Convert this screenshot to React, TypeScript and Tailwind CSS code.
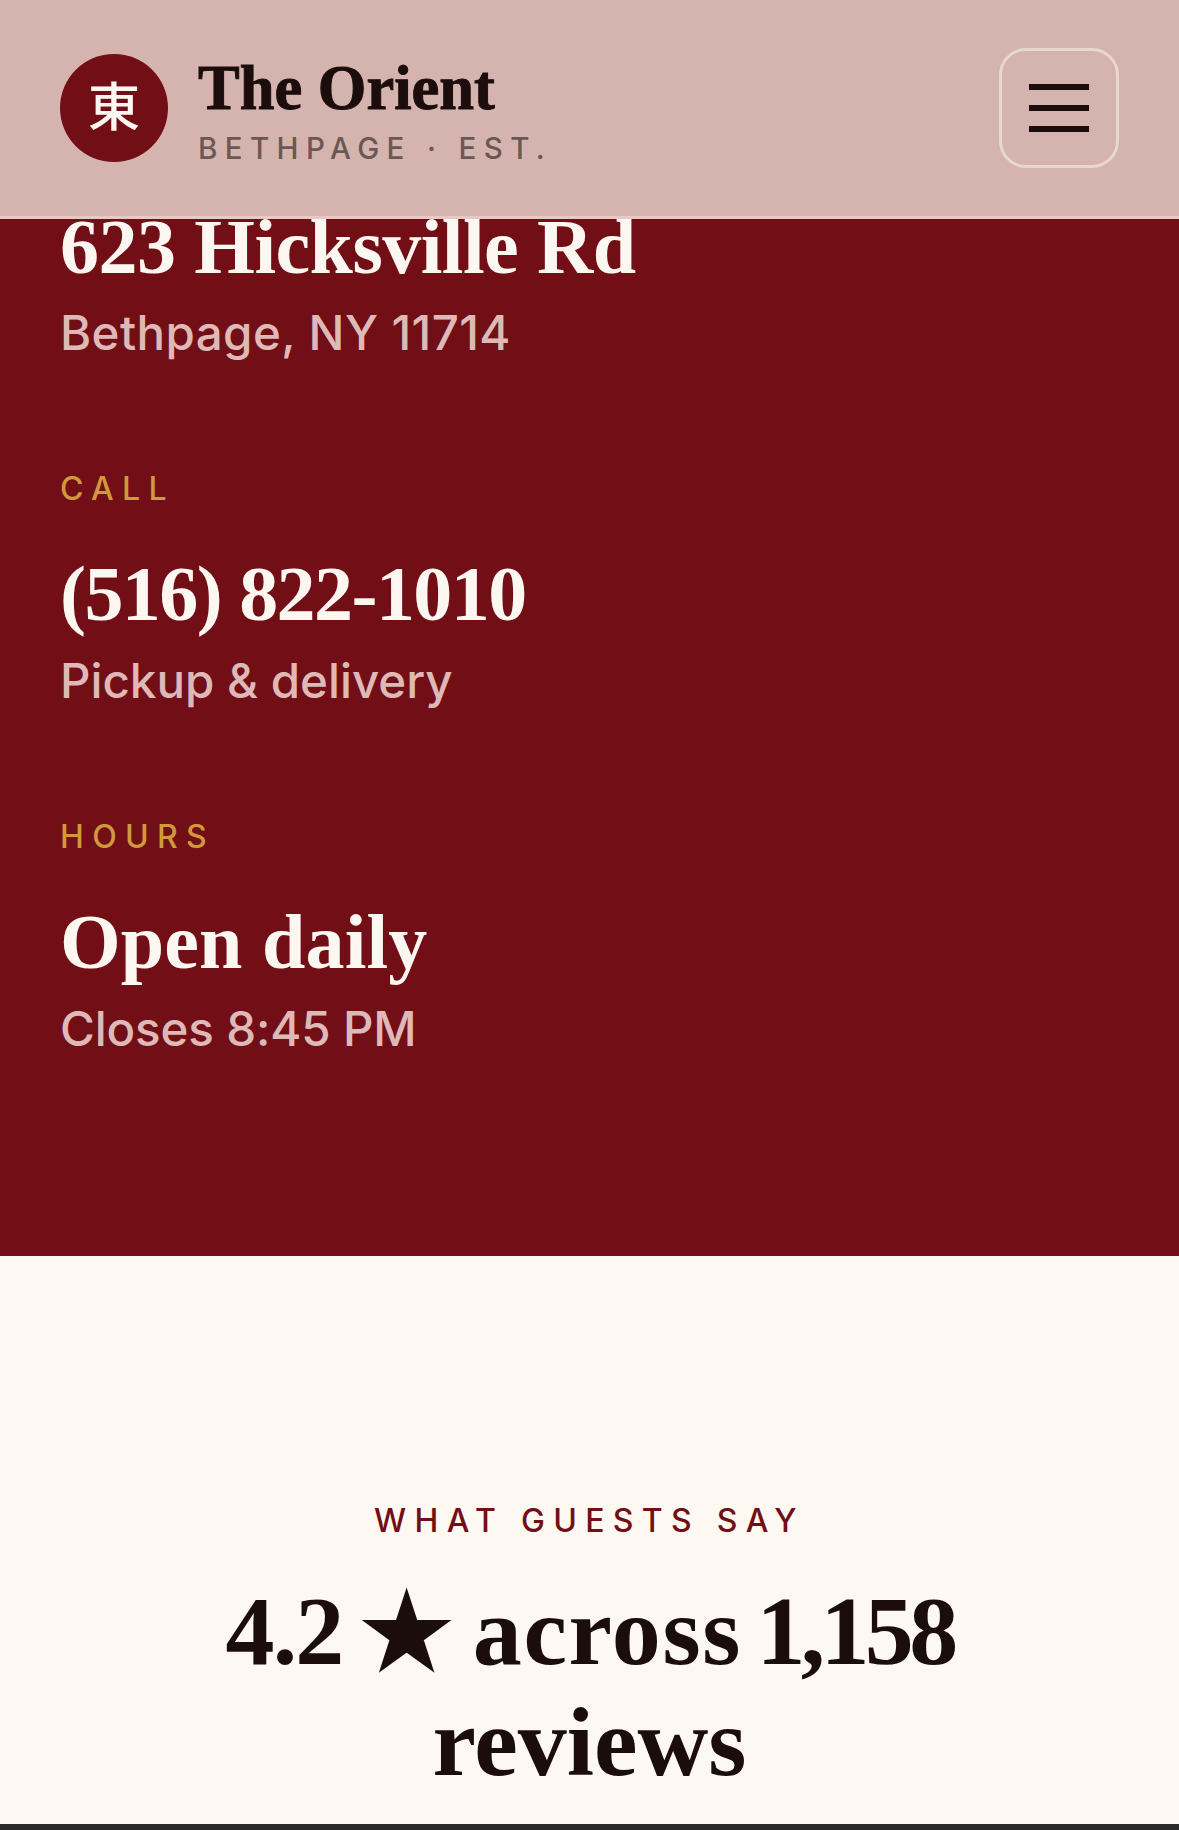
const serif = "font-['Liberation_Serif',serif] font-bold";
const sans = "font-['Inter',sans-serif]";

function Info({ label, title, sub, track, subTrack }: { label: string; title: string; sub: string; track: string; subTrack: string }) {
  return (
    <div className="mt-[107px]">
      <div className={`${sans} text-[32px] leading-[40px] font-medium tracking-[0.26em] text-[#d09a3c]`}>{label}</div>
      <div className={`${serif} ${track} mt-[39px] text-[78px] leading-[92px] text-[#fdf7f1]`}>{title}</div>
      <div className={`${sans} ${subTrack} mt-[12px] text-[47.5px] leading-[58px] font-medium text-[#dfb9b8]`}>{sub}</div>
    </div>
  );
}

export default function App() {
  return (
    <div className="flex h-[1830px] w-[1179px] flex-col overflow-hidden bg-[#fef8f2]">
      <header className="flex h-[219px] shrink-0 items-center justify-between border-b-[3px] border-[#e8c9c4] bg-[#d5b3af] pl-[60px] pr-[60px]">
        <div className="flex items-center gap-[30px]">
          <div className="flex h-[108px] w-[108px] items-center justify-center rounded-full bg-[#720f16] pb-[8px] font-['Noto_Sans_CJK_TC',sans-serif] text-[52px] font-medium text-[#fdf7f1]">東</div>
          <div className="pt-[6px]">
            <div className={`${serif} text-[62.5px] leading-[64px] text-[#1a0d0b] [-webkit-text-stroke:1px_#1a0d0b]`}>The Orient</div>
            <div className={`${sans} mt-[10px] text-[29.5px] leading-[36px] font-medium tracking-[0.25em] text-[#6b5852]`}>BETHPAGE · EST.</div>
          </div>
        </div>
        <button className="flex h-[120px] w-[120px] flex-col items-center justify-center gap-[15px] rounded-[27px] border-[3px] border-[#e8d8d2]">
          <span className="h-[6px] w-[60px] bg-[#1a0d0b]" />
          <span className="h-[6px] w-[60px] bg-[#1a0d0b]" />
          <span className="h-[6px] w-[60px] bg-[#1a0d0b]" />
        </button>
      </header>
      <section className="flex h-[1037px] shrink-0 flex-col overflow-hidden bg-[#720f16] px-[60px]">
        <div className={`${serif} mt-[-18px] text-[78px] leading-[92px] tracking-[-0.55px] text-[#fdf7f1]`}>623 Hicksville Rd</div>
        <div className={`${sans} mt-[11px] text-[47.5px] leading-[58px] font-medium tracking-[0.4px] text-[#dfb9b8]`}>Bethpage, NY 11714</div>
        <Info label="CALL" title="(516) 822-1010" sub="Pickup & delivery" track="tracking-[-1.55px]" subTrack="tracking-normal" />
        <Info label="HOURS" title="Open daily" sub="Closes 8:45 PM" track="tracking-[0.1px]" subTrack="tracking-[-0.15px]" />
      </section>
      <section className="flex-1 pt-[245px] text-center">
        <div className={`${sans} text-[32px] leading-[40px] font-medium tracking-[0.26em] text-[#720f16]`}>WHAT GUESTS SAY</div>
        <div className={`${serif} mt-[35px] text-[98px] leading-[111px] text-[#1a0d0b]`}>
          <span className="tracking-[-1.9px]">4.2</span>
          <span className="tracking-[-6.5px]"> </span>
          <span className="align-[-4px] text-[104px] leading-none">★</span>
          <span className="tracking-[-5px]"> </span>
          <span className="tracking-[1.6px]">across</span>
          <span className="tracking-[-10px]"> </span>
          <span className="tracking-[-4.7px]">1,158</span>
          <br />reviews
        </div>
      </section>
      <div className="h-[6px] shrink-0 bg-[#2a2a2a]" />
    </div>
  );
}
